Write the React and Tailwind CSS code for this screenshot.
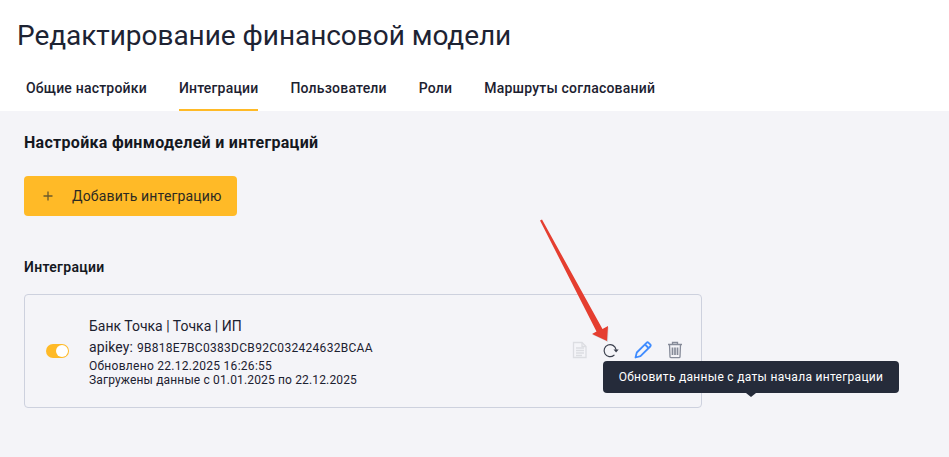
import React from "react";

function Toggle() {
  return (
    <div className="relative w-[23px] h-[14px] rounded-full bg-[#ffba27] shrink-0">
      <div className="absolute right-[1px] top-[1px] w-[12px] h-[12px] rounded-full bg-white" />
    </div>
  );
}

function Icons() {
  return (
    <div className="flex items-center mb-[2px]">
      <svg width="18" height="18" viewBox="0 0 18 18" fill="none" stroke="#dcdde2" strokeWidth="1.300" className="mr-[13px]">
        <path d="M2.500 1.500h8.500l4 4v11h-12.500z" />
        <path d="M11 1.500v4h4" />
        <path d="M5 7h8M5 9.500h8M5 12h8M5 14.500h6" />
      </svg>
      <svg width="18" height="18" viewBox="0 0 18 18" fill="none" className="mr-[14px]">
        <path d="M12 14.200A6 6 0 1 1 14 8.500" stroke="#3a3f4d" strokeWidth="1.200" strokeLinecap="round" />
        <path d="M11.500 8.500H16.700L14.100 11.500z" fill="#3a3f4d" />
      </svg>
      <svg width="18" height="18" viewBox="0 0 18 18" fill="none" stroke="#3f8cff" strokeWidth="1.800" className="mr-[15px]">
        <path d="M1.500 16.500l1.300-5L12.500 1.800a1.500 1.500 0 0 1 2.100 0l1.600 1.600a1.500 1.500 0 0 1 0 2.100L6.500 15.200z" strokeLinejoin="round" />
        <path d="M11 3.500l3.500 3.500" />
      </svg>
      <svg width="16" height="18" viewBox="0 0 16 18" fill="none" stroke="#868b99" strokeWidth="1.300">
        <path d="M1 3.500h14M5.500 3.500V1.500h5v2" />
        <path d="M2.500 3.500l.5 12.200a1 1 0 0 0 1 1h8a1 1 0 0 0 1-1l.5-12.200" />
        <path d="M5.500 6.500v7.500M8 6.500v7.500M10.500 6.500v7.500" strokeWidth="1.700" />
      </svg>
    </div>
  );
}

export default function App() {
  const tabs = ["Общие настройки", "Интеграции", "Пользователи", "Роли", "Маршруты согласований"];
  return (
    <div className="relative w-[949px] h-[457px] overflow-hidden bg-[#f4f4f8] text-[#1c2130] font-['Roboto','Noto_Sans',sans-serif]">
      <header className="bg-white h-[111px] pl-[17px] flex flex-col">
        <h1 className="text-[28px] leading-[36px] mt-[18px] font-normal tracking-[-0.05px] text-[#1d2333]">
          Редактирование финансовой модели
        </h1>
        <nav className="flex gap-[32px] ml-[9px] mt-[16px]">
          {tabs.map((t, i) => (
            <div key={t} className={`h-[41px] pt-[8px] text-[14px] leading-[20px] font-medium tracking-[0.2px] ${i === 1 ? "border-b-2 border-[#ffba27]" : ""}`}>
              {t}
            </div>
          ))}
        </nav>
      </header>
      <main className="pl-[24px] pt-[22px]">
        <h2 className="text-[16px] leading-[20px] font-bold tracking-[0.3px] text-[#14181f]">Настройка финмоделей и интеграций</h2>
        <button className="mt-[23px] w-[213px] h-[40px] rounded-[4px] bg-[#ffba27] flex items-center pl-[18px] text-[14px] text-[#2d2a22]">
          <svg width="12" height="12" viewBox="0 0 12 12" stroke="#6b5a2c" strokeWidth="1.300" className="mr-[18px]">
            <path d="M6 1.500v9M1.500 6h9" />
          </svg>
          <span className="tracking-[0.15px]">Добавить интеграцию</span>
        </button>
        <h3 className="mt-[41px] text-[14px] leading-[20px] font-semibold tracking-[0.3px] text-[#14181f]">Интеграции</h3>
        <section className="mt-[17px] w-[678px] h-[114px] rounded-[4px] border border-[#cdd1de] flex items-center pl-[21px] pr-[18px]">
          <Toggle />
          <div className="ml-[20px] pt-[2px] flex-1 flex flex-col">
            <div className="text-[14px] leading-[20px]">Банк Точка | Точка | ИП</div>
            <div className="flex items-baseline mt-[1px] leading-[20px]">
              <span className="text-[14px] tracking-[0.1px]">apikey:</span>
              <span className="ml-[4px] text-[12px] tracking-[0.3px]">9B818E7BC0383DCB92C032424632BCAA</span>
            </div>
            <div className="text-[12px] leading-[13px] mt-[2px] tracking-[0.28px]">Обновлено 22.12.2025 16:26:55</div>
            <div className="text-[12px] leading-[15px] tracking-[0.15px]">Загружены данные с 01.01.2025 по 22.12.2025</div>
          </div>
          <Icons />
        </section>
      </main>

      <div className="absolute left-[603px] top-[361px] w-[296px] h-[32px] rounded-[4px] bg-[#252b3a] text-white text-[12px] tracking-[0.3px] flex items-center justify-center">
        Обновить данные с даты начала интеграции
        <div className="absolute left-[143px] -bottom-[4px] w-0 h-0 border-x-[5px] border-x-transparent border-t-[4px] border-t-[#252b3a]" />
      </div>

      <svg className="absolute left-0 top-0 pointer-events-none" width="949" height="457">
        <path d="M593 335 L608 342 L608.500 327 Z" fill="#00000022" />
        <path d="M540 220.500 L542 219.500 L602.500 329 L608 326 L607 341 L592 334 L596.500 331.500 Z" fill="#e53e30" />
      </svg>
    </div>
  );
}
